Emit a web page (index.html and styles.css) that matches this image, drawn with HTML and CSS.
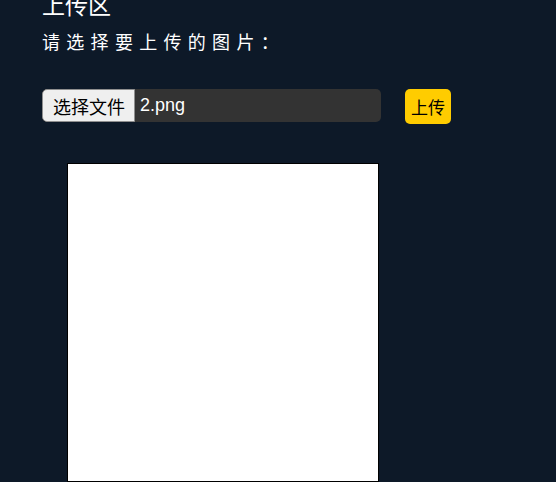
FILE: index.html
```html
<!DOCTYPE html>
<html lang="zh">
<head>
<meta charset="utf-8">
<link rel="stylesheet" href="styles.css">
</head>
<body>
<div class="page">
  <h2 class="title">上传区</h2>
  <p class="hint">请选择要上传的图片：</p>
  <div class="row">
    <div class="file">
      <span class="file-btn">选择文件</span>
      <span class="file-name">2.png</span>
    </div>
    <button class="upload">上传</button>
  </div>
  <div class="preview"></div>
</div>
</body>
</html>
```
FILE: styles.css
```css
html, body {
  margin: 0;
  padding: 0;
  background: #0d1928;
  overflow: hidden;
}
body {
  font-family: "Liberation Sans", "Noto Sans CJK SC", sans-serif;
  color: #fff;
}
.page {
  padding: 0 0 0 42px;
}
.title {
  margin: -8px 0 0;
  font-size: 23px;
  line-height: 28px;
  font-weight: normal;
}
.hint {
  margin: 11px 0 0;
  font-size: 18px;
  line-height: 24px;
  letter-spacing: 6.3px;
}
.row {
  display: flex;
  align-items: flex-start;
  gap: 24px;
  margin-top: 34px;
}
.file {
  display: flex;
  width: 339px;
  height: 33px;
  background: #333;
  border-radius: 5px;
  overflow: hidden;
}
.file-btn {
  display: flex;
  align-items: center;
  padding: 0 9px 0 10px;
  background: #efefef;
  color: #000;
  font-size: 18px;
  border: 1px solid #8f8f8f;
  border-radius: 5px 0 0 5px;
  box-sizing: border-box;
}
.file-name {
  display: flex;
  align-items: center;
  padding-left: 5px;
  font-size: 18px;
  color: #fff;
}
.upload {
  height: 35px;
  padding: 0 6px;
  background: #ffcc00;
  color: #000;
  border: none;
  border-radius: 5px;
  font-family: "Noto Sans CJK SC", sans-serif;
  font-size: 17px;
}
.preview {
  margin: 39px 0 0 25px;
  width: 310px;
  height: 317px;
  background: #fff;
  border: 1px solid #000;
}
```
